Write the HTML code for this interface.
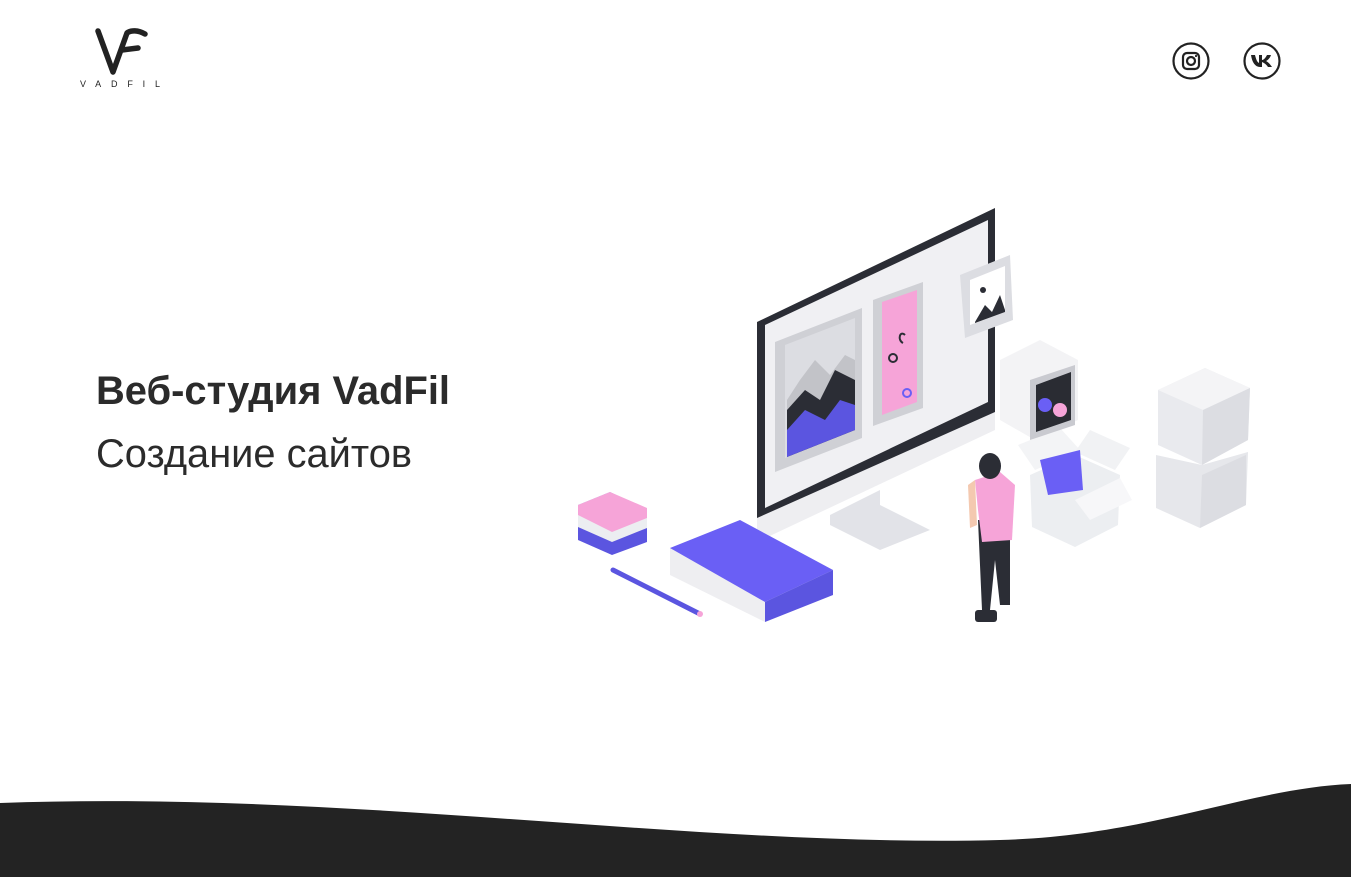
<!DOCTYPE html>
<html><head><meta charset="utf-8"><style>
html,body{margin:0;padding:0;background:#fff;}
body{width:1351px;height:877px;position:relative;overflow:hidden;font-family:"Liberation Sans",sans-serif;}
svg{position:absolute;left:0;top:0}
</style></head><body>
<svg width="1351" height="877" viewBox="0 0 1351 877" xmlns="http://www.w3.org/2000/svg">
<!-- logo -->
<path d="M98,31 L113,72 L127,33 C131,30 138,30 145,34" fill="none" stroke="#222" stroke-width="5.5" stroke-linecap="round" stroke-linejoin="round"/>
<path d="M122,50 L138,48" fill="none" stroke="#222" stroke-width="5.5" stroke-linecap="round"/>
<text x="80" y="87" font-family="Liberation Sans,sans-serif" font-size="9" fill="#222" textLength="80" lengthAdjust="spacing">VADFIL</text>
<!-- social -->
<circle cx="1191" cy="61" r="17.5" fill="none" stroke="#222" stroke-width="2.2"/>
<rect x="1183" y="53" width="16" height="16" rx="4" fill="none" stroke="#222" stroke-width="2.2"/>
<circle cx="1191" cy="61" r="4" fill="none" stroke="#222" stroke-width="2.2"/>
<circle cx="1196" cy="56" r="1.1" fill="#222"/>
<circle cx="1262" cy="61" r="17.5" fill="none" stroke="#222" stroke-width="2.2"/>
<path d="M1251,55 L1255,55 C1256,59 1257,62 1259,63 L1259,55 L1262,55 L1262,60 C1264,60 1266,57 1267,55 L1271,55 C1270,58 1268,60 1266,61 C1268,62 1270,64 1272,67 L1268,67 C1266,64 1264,63 1262,62 L1262,67 L1260,67 C1255,67 1252,62 1251,55Z" fill="#222"/>
<!-- headings -->
<text x="96" y="404" font-family="Liberation Sans,sans-serif" font-weight="bold" font-size="40" fill="#2b2b2b" textLength="354" lengthAdjust="spacingAndGlyphs">Веб-студия VadFil</text>
<text x="96" y="467" font-family="Liberation Sans,sans-serif" font-size="40" fill="#2b2b2b" textLength="316" lengthAdjust="spacingAndGlyphs">Создание сайтов</text>

<!-- illustration -->
<path d="M1158,390 L1205,368 L1250,388 L1248,440 L1202,465 L1158,445Z" fill="#e9eaee"/>
<path d="M1158,390 L1205,368 L1250,388 L1203,410Z" fill="#f4f4f6"/>
<path d="M1203,410 L1250,388 L1248,440 L1202,465Z" fill="#dcdde2"/>
<path d="M1156,455 L1202,465 L1248,452 L1246,505 L1200,528 L1156,508Z" fill="#e6e7eb"/>
<path d="M1202,475 L1246,455 L1246,505 L1200,528Z" fill="#dcdde2"/>
<path d="M1030,475 L1075,455 L1120,475 L1118,525 L1075,547 L1032,527Z" fill="#eceef1"/>
<path d="M1018,445 L1060,428 L1080,450 L1035,470Z" fill="#f3f4f6"/>
<path d="M1090,430 L1130,448 L1115,470 L1075,452Z" fill="#f1f2f4"/>
<path d="M1040,460 L1080,450 L1083,490 L1048,495Z" fill="#6a5ff5"/>
<path d="M1075,500 L1120,478 L1132,500 L1090,520Z" fill="#f7f7f9"/>
<path d="M1000,360 L1040,340 L1078,360 L1078,420 L1035,440 L1000,420Z" fill="#f3f3f5"/>
<path d="M1030,380 L1075,365 L1075,425 L1030,440Z" fill="#c9cad0"/>
<path d="M1036,385 L1071,372 L1071,420 L1036,432Z" fill="#2a2c33"/>
<circle cx="1045" cy="405" r="7" fill="#6a5ff5"/>
<circle cx="1060" cy="410" r="7" fill="#f6a4d8"/>
<path d="M757,325 L995,212 L995,430 L757,542Z" fill="#eeeef1"/>
<path d="M757,322 L995,208 L995,412 L757,518Z" fill="#2b2d35"/>
<path d="M765,325 L988,220 L988,402 L765,508Z" fill="#f0f0f3"/>
<path d="M830,515 L880,490 L880,505 L930,530 L880,550 L830,525Z" fill="#e2e3e8"/>
<path d="M775,342 L862,308 L862,438 L775,472Z" fill="#cfd0d5"/>
<path d="M785,345 L855,318 L855,430 L785,458Z" fill="#dcdde2"/>
<path d="M787,400 L800,380 L815,360 L830,375 L845,355 L855,360 L855,430 L787,457Z" fill="#c2c3c8"/>
<path d="M787,410 L805,390 L820,400 L835,370 L855,380 L855,430 L787,457Z" fill="#2b2d35"/>
<path d="M787,430 L805,410 L825,420 L840,400 L855,405 L855,430 L787,457Z" fill="#5b55e0"/>
<path d="M873,300 L923,282 L923,408 L873,426Z" fill="#cfd0d5"/>
<path d="M882,302 L917,290 L917,402 L882,415Z" fill="#f6a4d8"/>
<circle cx="893" cy="358" r="4" fill="none" stroke="#2b2d35" stroke-width="2"/>
<circle cx="907" cy="393" r="4" fill="none" stroke="#6a5ff5" stroke-width="2"/>
<path d="M905,335 C900,330 897,340 903,343" fill="none" stroke="#2b2d35" stroke-width="2"/>
<path d="M960,275 L1010,255 L1013,320 L965,338Z" fill="#dcdde2"/>
<path d="M970,280 L1005,266 L1005,312 L970,325Z" fill="#fff"/>
<path d="M975,322 L985,305 L992,312 L1000,295 L1005,310 L1005,312 L975,323Z" fill="#2b2d35"/>
<circle cx="983" cy="290" r="3" fill="#2b2d35"/>
<path d="M978,520 L1010,520 L1010,605 L1000,605 L995,560 L990,610 L982,610Z" fill="#2b2d35"/>
<path d="M975,480 L1000,472 L1015,485 L1012,540 L982,542 L978,510Z" fill="#f6a4d8"/>
<path d="M968,485 L975,480 L977,525 L970,528Z" fill="#f4c9b0"/>
<ellipse cx="990" cy="466" rx="11" ry="13" fill="#2b2d35"/>
<rect x="975" y="610" width="22" height="12" rx="3" fill="#2b2d35"/>
<path d="M670,548 L740,520 L833,570 L833,595 L765,622 L670,575Z" fill="#eeeef1"/>
<path d="M670,548 L740,520 L833,570 L765,602Z" fill="#6a5ff5"/>
<path d="M765,602 L833,570 L833,595 L765,622Z" fill="#5b55e0"/>
<path d="M578,505 L610,492 L647,510 L647,542 L612,555 L578,540Z" fill="#5b55e0"/>
<path d="M578,505 L610,492 L647,510 L647,528 L612,542 L578,527Z" fill="#eceef1"/>
<path d="M578,505 L610,492 L647,508 L647,518 L612,532 L578,515Z" fill="#f6a4d8"/>
<path d="M613,570 L700,614" stroke="#5b55e0" stroke-width="5" stroke-linecap="round"/>
<circle cx="700" cy="614" r="3" fill="#f6a4d8"/>

<path d="M0,803 C350,790 700,848 1000,840 C1150,836 1250,788 1351,784 L1351,877 L0,877Z" fill="#232323"/>
</svg>
</body></html>
